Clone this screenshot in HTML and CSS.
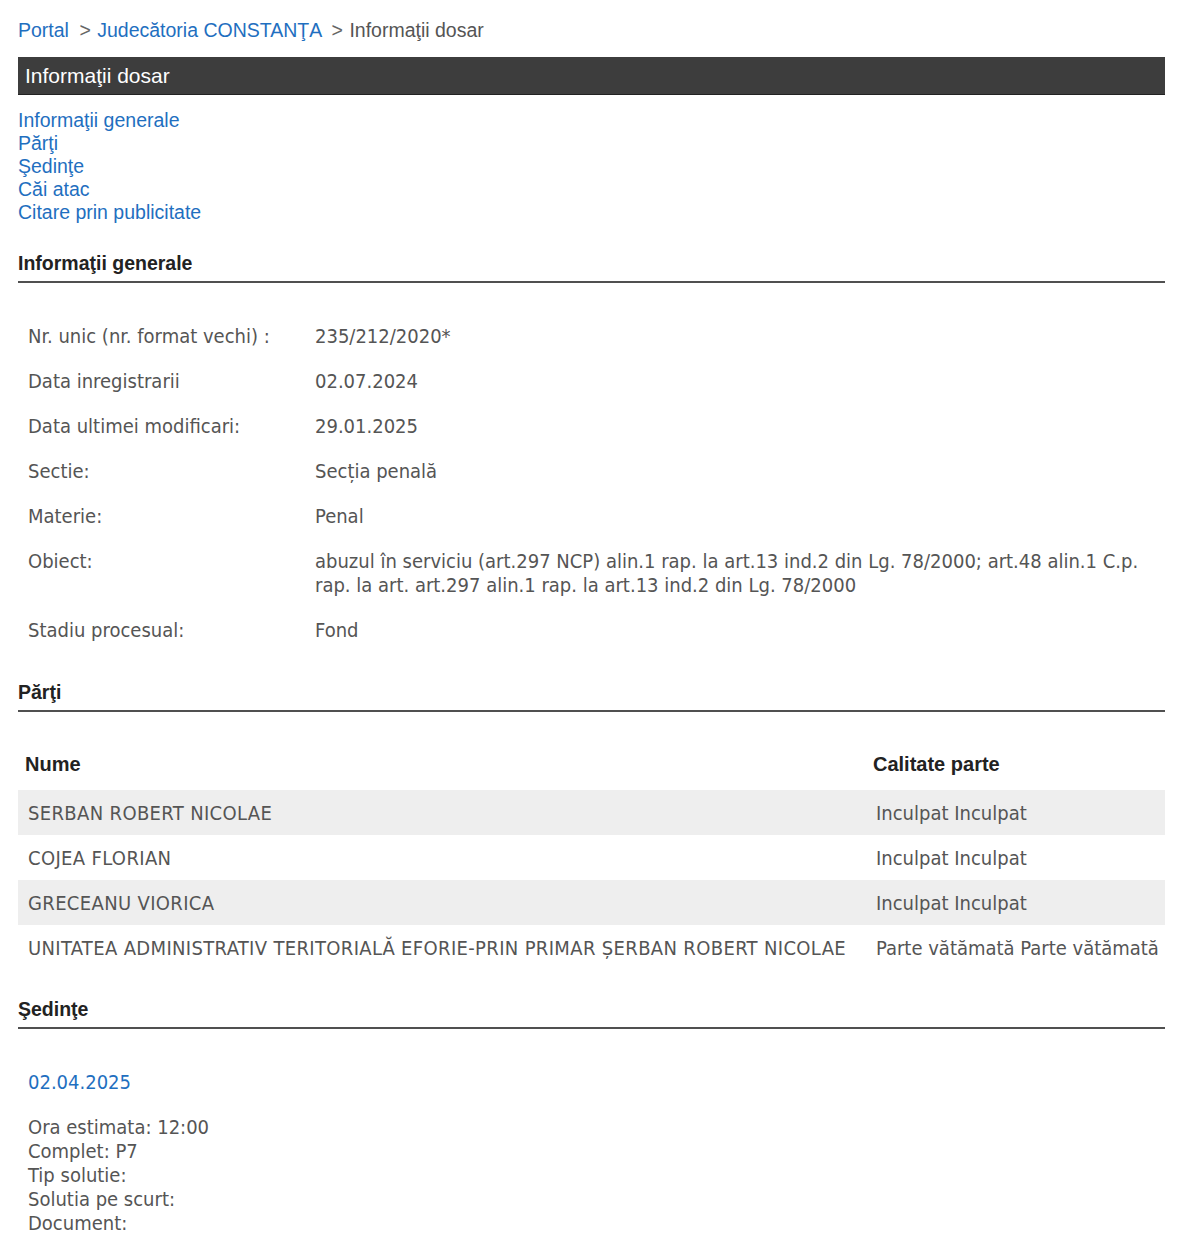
FILE: index.html
```html
<!DOCTYPE html>
<html lang="ro">
<head>
<meta charset="utf-8">
<title>Informaţii dosar</title>
<link rel="stylesheet" href="styles.css">
</head>
<body>
<div class="page">
  <nav class="crumbs">
    <a href="#">Portal</a>
    <span class="sep">&gt;</span>
    <a href="#">Judecătoria CONSTANŢA</a>
    <span class="sep">&gt;</span>
    <span class="current">Informaţii dosar</span>
  </nav>

  <h1 class="titlebar">Informaţii dosar</h1>

  <ul class="toc">
    <li><a href="#generale">Informaţii generale</a></li>
    <li><a href="#parti">Părţi</a></li>
    <li><a href="#sedinte">Şedinţe</a></li>
    <li><a href="#cai">Căi atac</a></li>
    <li><a href="#citare">Citare prin publicitate</a></li>
  </ul>

  <section class="block" id="generale">
    <h2 class="block-title">Informaţii generale</h2>
    <dl class="info">
      <div class="info-row"><dt>Nr. unic (nr. format vechi) :</dt><dd>235/212/2020*</dd></div>
      <div class="info-row"><dt>Data inregistrarii</dt><dd>02.07.2024</dd></div>
      <div class="info-row"><dt>Data ultimei modificari:</dt><dd>29.01.2025</dd></div>
      <div class="info-row"><dt>Sectie:</dt><dd>Secția penală</dd></div>
      <div class="info-row"><dt>Materie:</dt><dd>Penal</dd></div>
      <div class="info-row"><dt>Obiect:</dt><dd>abuzul în serviciu (art.297 NCP) alin.1 rap. la art.13 ind.2 din Lg. 78/2000; art.48 alin.1 C.p. rap. la art. art.297 alin.1 rap. la art.13 ind.2 din Lg. 78/2000</dd></div>
      <div class="info-row"><dt>Stadiu procesual:</dt><dd>Fond</dd></div>
    </dl>
  </section>

  <section class="block" id="parti">
    <h2 class="block-title">Părţi</h2>
    <table class="parties">
      <thead>
        <tr><th class="col-name">Nume</th><th>Calitate parte</th></tr>
      </thead>
      <tbody>
        <tr><td>SERBAN ROBERT NICOLAE</td><td>Inculpat Inculpat</td></tr>
        <tr><td>COJEA FLORIAN</td><td>Inculpat Inculpat</td></tr>
        <tr><td>GRECEANU VIORICA</td><td>Inculpat Inculpat</td></tr>
        <tr><td>UNITATEA ADMINISTRATIV TERITORIALĂ EFORIE-PRIN PRIMAR ȘERBAN ROBERT NICOLAE</td><td>Parte vătămată Parte vătămată</td></tr>
      </tbody>
    </table>
  </section>

  <section class="block" id="sedinte">
    <h2 class="block-title">Şedinţe</h2>
    <div class="hearing">
      <a class="hearing-date" href="#">02.04.2025</a>
      <div class="hearing-lines">
        <div>Ora estimata: 12:00</div>
        <div>Complet: P7</div>
        <div>Tip solutie:</div>
        <div>Solutia pe scurt:</div>
        <div>Document:</div>
      </div>
    </div>
  </section>
</div>
</body>
</html>
```

FILE: styles.css
```css
html, body {
  margin: 0;
  padding: 0;
  background: #ffffff;
}

.page {
  width: 1147px;
  padding: 0 0 0 18px;
  font-family: "Liberation Sans", Arial, sans-serif;
  color: #333;
}

a {
  color: #1f6fc0;
  text-decoration: none;
}

/* breadcrumb trail */
.crumbs {
  font-size: 19.5px;
  line-height: 24px;
  padding-top: 18px;
  height: 39px;
  box-sizing: border-box;
  color: #555;
}
.crumbs .sep {
  margin: 0 1px 0 5px;
  color: #666;
}
.crumbs .current {
  color: #555;
}

/* dark page title bar */
.titlebar {
  margin: 18px 0 0 0;
  height: 38px;
  background: #3d3d3d;
  color: #fff;
  font-size: 21px;
  font-weight: normal;
  line-height: 38px;
  padding: 0 7px;
  border-bottom: 1px solid #222;
  box-sizing: border-box;
}

/* in-page navigation */
.toc {
  list-style: none;
  margin: 14px 0 0 0;
  padding: 0;
  font-size: 19.5px;
  line-height: 23px;
}

/* section headings with rule */
.block-title {
  margin: 0;
  font-size: 19.5px;
  font-weight: bold;
  color: #222;
  line-height: 24px;
  padding-bottom: 6px;
  border-bottom: 2px solid #505050;
}
#generale { margin-top: 27px; }
#parti { margin-top: 38px; }
#sedinte { margin-top: 27px; }

/* general information list */
.info {
  margin: 41px 0 0 0;
  font-family: "DejaVu Sans Condensed", "DejaVu Sans", Verdana, sans-serif;
  font-size: 20px;
  color: #555;
}
.info-row {
  display: flex;
  padding: 0 10px;
  margin-bottom: 21px;
  line-height: 24px;
}
.info dt {
  width: 287px;
  flex: none;
}
.info dd {
  margin: 0;
  flex: 1;
}

/* parties table */
.parties {
  width: 100%;
  border-collapse: collapse;
  margin-top: 34px;
}
.parties th {
  text-align: left;
  font-size: 20px;
  font-weight: bold;
  color: #222;
  padding: 6px 7px 14px;
  line-height: 24px;
}
.parties th.col-name { width: 834px; }
.parties td {
  font-family: "DejaVu Sans Condensed", "DejaVu Sans", Verdana, sans-serif;
  font-size: 20px;
  color: #555;
  padding: 0 10px;
  height: 45px;
  line-height: 24px;
  white-space: nowrap;
}
.parties td:first-child { letter-spacing: 0.35px; }
.parties td + td { padding-right: 0; }
.parties tbody tr:nth-child(odd) td {
  background: #eeeeee;
}

/* hearings */
.hearing {
  padding: 41px 10px 0;
  font-family: "DejaVu Sans Condensed", "DejaVu Sans", Verdana, sans-serif;
  font-size: 20px;
  color: #555;
}
.hearing-date {
  display: block;
  line-height: 24px;
}
.hearing-lines {
  margin-top: 21px;
  line-height: 24px;
}
```
